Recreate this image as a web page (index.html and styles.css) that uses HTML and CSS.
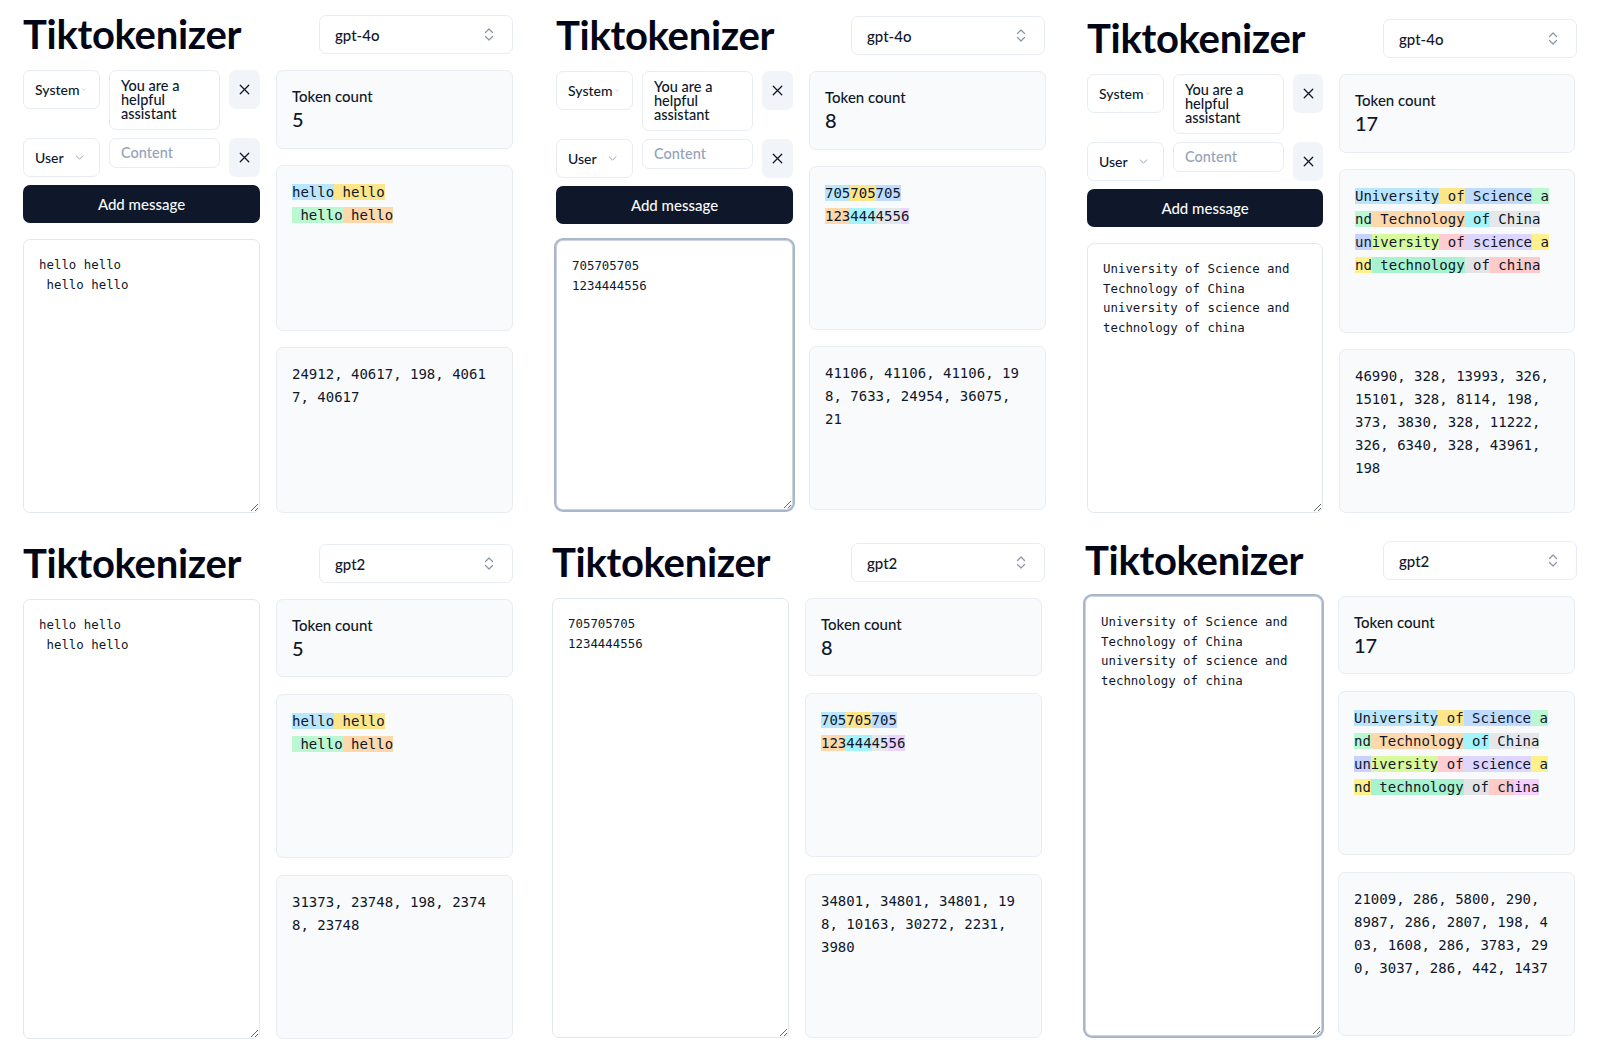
FILE: index.html
```html
<!DOCTYPE html>
<html lang="en">
<head>
<meta charset="utf-8">
<title>Tiktokenizer</title>
<link rel="stylesheet" href="styles.css">
</head>
<body>
<main class="grid">

  <!-- Panel 1 -->
  <section class="panel p1">
    <header class="bar">
      <h1 class="title">Tiktokenizer</h1>
      <button class="model"><span>gpt-4o</span><svg class="updown" viewBox="0 0 10 15"><polyline points="1.5,5.5 5,2 8.5,5.5"/><polyline points="1.5,9.5 5,13 8.5,9.5"/></svg></button>
    </header>
    <div class="body">
      <div class="left">
        <div class="msg">
          <button class="role sys"><span>System</span><svg class="chev" viewBox="0 0 10 6"><polyline points="1,1 5,5 9,1"/></svg></button>
          <div class="content">You are a helpful assistant</div>
          <button class="close"><svg viewBox="0 0 24 24"><path d="M18 6 6 18M6 6l12 12"/></svg></button>
        </div>
        <div class="msg">
          <button class="role user"><span>User</span><svg class="chev" viewBox="0 0 10 6"><polyline points="1,1 5,5 9,1"/></svg></button>
          <div class="content empty">Content</div>
          <button class="close"><svg viewBox="0 0 24 24"><path d="M18 6 6 18M6 6l12 12"/></svg></button>
        </div>
        <button class="add">Add message</button>
        <textarea class="editor gap">hello hello
 hello hello</textarea>
      </div>
      <div class="right">
        <div class="card count"><div class="label">Token count</div><div class="num">5</div></div>
        <div class="card tokens">
          <div class="line"><span class="c0">hello</span><span class="c1"> hello</span></div>
          <div class="line"><span class="c3"> hello</span><span class="c4"> hello</span></div>
        </div>
        <div class="card ids">24912, 40617, 198, 40617, 40617</div>
      </div>
    </div>
  </section>

  <!-- Panel 2 -->
  <section class="panel p2 small">
    <header class="bar">
      <h1 class="title">Tiktokenizer</h1>
      <button class="model"><span>gpt-4o</span><svg class="updown" viewBox="0 0 10 15"><polyline points="1.5,5.5 5,2 8.5,5.5"/><polyline points="1.5,9.5 5,13 8.5,9.5"/></svg></button>
    </header>
    <div class="body">
      <div class="left">
        <div class="msg">
          <button class="role sys"><span>System</span><svg class="chev" viewBox="0 0 10 6"><polyline points="1,1 5,5 9,1"/></svg></button>
          <div class="content">You are a helpful assistant</div>
          <button class="close"><svg viewBox="0 0 24 24"><path d="M18 6 6 18M6 6l12 12"/></svg></button>
        </div>
        <div class="msg">
          <button class="role user"><span>User</span><svg class="chev" viewBox="0 0 10 6"><polyline points="1,1 5,5 9,1"/></svg></button>
          <div class="content empty">Content</div>
          <button class="close"><svg viewBox="0 0 24 24"><path d="M18 6 6 18M6 6l12 12"/></svg></button>
        </div>
        <button class="add">Add message</button>
        <textarea class="editor gap focus">705705705
1234444556</textarea>
      </div>
      <div class="right">
        <div class="card count"><div class="label">Token count</div><div class="num">8</div></div>
        <div class="card tokens">
          <div class="line"><span class="c0">705</span><span class="c1">705</span><span class="c2">705</span></div>
          <div class="line"><span class="c4">123</span><span class="c5">444</span><span class="c6">455</span><span class="c7">6</span></div>
        </div>
        <div class="card ids">41106, 41106, 41106, 198, 7633, 24954, 36075, 21</div>
      </div>
    </div>
  </section>

  <!-- Panel 3 -->
  <section class="panel p3 small narrow">
    <header class="bar">
      <h1 class="title">Tiktokenizer</h1>
      <button class="model"><span>gpt-4o</span><svg class="updown" viewBox="0 0 10 15"><polyline points="1.5,5.5 5,2 8.5,5.5"/><polyline points="1.5,9.5 5,13 8.5,9.5"/></svg></button>
    </header>
    <div class="body">
      <div class="left">
        <div class="msg">
          <button class="role sys"><span>System</span><svg class="chev" viewBox="0 0 10 6"><polyline points="1,1 5,5 9,1"/></svg></button>
          <div class="content">You are a helpful assistant</div>
          <button class="close"><svg viewBox="0 0 24 24"><path d="M18 6 6 18M6 6l12 12"/></svg></button>
        </div>
        <div class="msg">
          <button class="role user"><span>User</span><svg class="chev" viewBox="0 0 10 6"><polyline points="1,1 5,5 9,1"/></svg></button>
          <div class="content empty">Content</div>
          <button class="close"><svg viewBox="0 0 24 24"><path d="M18 6 6 18M6 6l12 12"/></svg></button>
        </div>
        <button class="add">Add message</button>
        <textarea class="editor gap">University of Science and Technology of China
university of science and technology of china</textarea>
      </div>
      <div class="right">
        <div class="card count"><div class="label">Token count</div><div class="num">17</div></div>
        <div class="card tokens">
          <div class="line"><span class="c0">University</span><span class="c1"> of</span><span class="c2"> Science</span><span class="c3"> a</span></div>
          <div class="line"><span class="c3">nd</span><span class="c4"> Technology</span><span class="c5"> of</span><span class="c6"> China</span></div>
          <div class="line"><span class="c8">un</span><span class="c9">iversity</span><span class="c10"> of</span><span class="c11"> science</span><span class="c12"> a</span></div>
          <div class="line"><span class="c12">nd</span><span class="c13"> technology</span><span class="c14"> of</span><span class="c15"> china</span></div>
        </div>
        <div class="card ids">46990, 328, 13993, 326, 15101, 328, 8114, 198, 373, 3830, 328, 11222, 326, 6340, 328, 43961, 198</div>
      </div>
    </div>
  </section>

  <!-- Panel 4 -->
  <section class="panel p4 lower">
    <header class="bar">
      <h1 class="title">Tiktokenizer</h1>
      <button class="model"><span>gpt2</span><svg class="updown" viewBox="0 0 10 15"><polyline points="1.5,5.5 5,2 8.5,5.5"/><polyline points="1.5,9.5 5,13 8.5,9.5"/></svg></button>
    </header>
    <div class="body">
      <div class="left">
        <textarea class="editor">hello hello
 hello hello</textarea>
      </div>
      <div class="right">
        <div class="card count"><div class="label">Token count</div><div class="num">5</div></div>
        <div class="card tokens">
          <div class="line"><span class="c0">hello</span><span class="c1"> hello</span></div>
          <div class="line"><span class="c3"> hello</span><span class="c4"> hello</span></div>
        </div>
        <div class="card ids">31373, 23748, 198, 23748, 23748</div>
      </div>
    </div>
  </section>

  <!-- Panel 5 -->
  <section class="panel p5 lower">
    <header class="bar">
      <h1 class="title">Tiktokenizer</h1>
      <button class="model"><span>gpt2</span><svg class="updown" viewBox="0 0 10 15"><polyline points="1.5,5.5 5,2 8.5,5.5"/><polyline points="1.5,9.5 5,13 8.5,9.5"/></svg></button>
    </header>
    <div class="body">
      <div class="left">
        <textarea class="editor">705705705
1234444556</textarea>
      </div>
      <div class="right">
        <div class="card count"><div class="label">Token count</div><div class="num">8</div></div>
        <div class="card tokens">
          <div class="line"><span class="c0">705</span><span class="c1">705</span><span class="c2">705</span></div>
          <div class="line"><span class="c4">123</span><span class="c5">444</span><span class="c6">45</span><span class="c7">56</span></div>
        </div>
        <div class="card ids">34801, 34801, 34801, 198, 10163, 30272, 2231, 3980</div>
      </div>
    </div>
  </section>

  <!-- Panel 6 -->
  <section class="panel p6 lower">
    <header class="bar">
      <h1 class="title">Tiktokenizer</h1>
      <button class="model"><span>gpt2</span><svg class="updown" viewBox="0 0 10 15"><polyline points="1.5,5.5 5,2 8.5,5.5"/><polyline points="1.5,9.5 5,13 8.5,9.5"/></svg></button>
    </header>
    <div class="body">
      <div class="left">
        <textarea class="editor focus">University of Science and Technology of China
university of science and technology of china</textarea>
      </div>
      <div class="right">
        <div class="card count"><div class="label">Token count</div><div class="num">17</div></div>
        <div class="card tokens">
          <div class="line"><span class="c0">University</span><span class="c1"> of</span><span class="c2"> Science</span><span class="c3"> a</span></div>
          <div class="line"><span class="c3">nd</span><span class="c4"> Technology</span><span class="c5"> of</span><span class="c6"> China</span></div>
          <div class="line"><span class="c8">un</span><span class="c9">iversity</span><span class="c10"> of</span><span class="c11"> science</span><span class="c12"> a</span></div>
          <div class="line"><span class="c12">nd</span><span class="c13"> technology</span><span class="c14"> of</span><span class="c15"> ch</span><span class="c16">ina</span></div>
        </div>
        <div class="card ids">21009, 286, 5800, 290, 8987, 286, 2807, 198, 403, 1608, 286, 3783, 290, 3037, 286, 442, 1437</div>
      </div>
    </div>
  </section>

</main>
</body>
</html>
```

FILE: styles.css
```css
* { box-sizing: border-box; }

body {
  margin: 0;
  background: #ffffff;
  color: #0f172a;
  font-family: Lato, "Noto Sans", sans-serif;
}

.grid {
  display: grid;
  grid-template-columns: repeat(3, 490px);
  column-gap: 42px;
  row-gap: 31px;
  align-items: start;
  padding: 15px 0 0 23px;
}

.panel {
  display: flex;
  flex-direction: column;
  gap: 16px;
}
.p2 { margin: 1px 0 0 1px; }
.p3 { margin: 4px 0 0 0; }
.p5 { margin: -1px 0 0 -3px; }
.p6 { margin: -3px 0 0 -2px; }

.bar {
  display: flex;
  justify-content: space-between;
  align-items: center;
  height: 39px;
}

.title {
  margin: 0;
  font-size: 40px;
  line-height: 39px;
  font-weight: 700;
  color: #020617;
  letter-spacing: -0.3px;
}

button {
  font-family: inherit;
  color: inherit;
  cursor: pointer;
}

.model {
  width: 194px;
  height: 39px;
  display: flex;
  align-items: center;
  justify-content: space-between;
  padding: 0 18px 0 15px;
  background: #ffffff;
  border: 1px solid #e8edf3;
  border-radius: 7px;
  font-size: 15px;
  font-weight: 500;
}

.updown {
  width: 10px;
  height: 15px;
  fill: none;
  stroke: #8b95a5;
  stroke-width: 1.2;
  stroke-linecap: round;
  stroke-linejoin: round;
}

.body {
  display: grid;
  grid-template-columns: 237px 237px;
  column-gap: 16px;
}
.narrow .body { grid-template-columns: 236px 236px; }

.left {
  display: flex;
  flex-direction: column;
  gap: 8px;
}

.msg {
  display: grid;
  grid-template-columns: 77px 111px 1fr;
  column-gap: 9px;
  align-items: start;
}

.role {
  height: 39px;
  display: flex;
  align-items: center;
  padding: 0 13px 0 11px;
  background: #ffffff;
  border: 1px solid #e8edf3;
  border-radius: 7px;
  font-size: 14px;
  font-weight: 500;
}
.role .chev {
  margin-left: auto;
  fill: none;
  stroke: #94a3b8;
  stroke-width: 1.2;
  stroke-linecap: round;
  stroke-linejoin: round;
}
.sys .chev { width: 4px; height: 3px; }
.user .chev { width: 9px; height: 5px; margin-right: 2px; }

.content {
  min-height: 30px;
  padding: 8px 11px 8px 11px;
  border: 1px solid #e8edf3;
  border-radius: 7px;
  background: #ffffff;
  font-size: 14.5px;
  line-height: 14px;
  font-weight: 500;
}
.content.empty {
  height: 30px;
  padding: 6px 11px;
  line-height: 16px;
  color: #94a3b8;
}

.close {
  height: 39px;
  display: flex;
  align-items: center;
  justify-content: center;
  background: #f1f5f9;
  border: none;
  border-radius: 7px;
  padding: 0;
}
.close svg {
  width: 17px;
  height: 17px;
  fill: none;
  stroke: #0f172a;
  stroke-width: 1.8;
  stroke-linecap: round;
}

.add {
  height: 38px;
  background: #0f172a;
  color: #f8fafc;
  border: none;
  border-radius: 7px;
  font-size: 15px;
  font-weight: 500;
}

.editor {
  flex: 1;
  min-height: 0;
  width: 100%;
  margin: 0;
  padding: 15px;
  border: 1px solid #e2e8f0;
  border-radius: 7px;
  background: #ffffff;
  color: #0f172a;
  font-family: "DejaVu Sans Mono", "Liberation Mono", monospace;
  font-size: 12.4px;
  line-height: 19.5px;
  outline: none;
}
.editor.gap { margin-top: 8px; }
.editor.focus {
  border-color: #cbd5e1;
  box-shadow: 0 0 0 2px #aab7c9;
}

.right {
  display: flex;
  flex-direction: column;
  gap: 16px;
}

.card {
  background: #f8fafc;
  border: 1px solid #e8edf3;
  border-radius: 7px;
  padding: 15px;
}

.count { height: 79px; }
.label { font-size: 15px; line-height: 20px; font-weight: 500; }
.num { font-size: 20px; line-height: 26px; font-weight: 500; }

.tokens,
.ids {
  height: 166px;
  font-family: "DejaVu Sans Mono", "Liberation Mono", monospace;
  font-size: 14px;
  line-height: 23px;
  color: #0f172a;
}
.small .tokens,
.small .ids { height: 164px; }

.lower .right { gap: 17px; }
.lower .count { height: 78px; }
.lower .tokens,
.lower .ids { height: 164px; }

.line { white-space: pre; }

.ids {
  padding-right: 20px;
  word-break: break-all;
}

.c0 { background: #bae6fd; }
.c1 { background: #fde68a; }
.c2 { background: #bfdbfe; }
.c3 { background: #bbf7d0; }
.c4 { background: #fed7aa; }
.c5 { background: #a5f3fc; }
.c6 { background: #e5e7eb; }
.c7 { background: #e9d5ff; }
.c8 { background: #c7d2fe; }
.c9 { background: #d9f99d; }
.c10 { background: #fecdd3; }
.c11 { background: #ddd6fe; }
.c12 { background: #fef08a; }
.c13 { background: #a7f3d0; }
.c14 { background: #e4e4e7; }
.c15 { background: #fecaca; }
.c16 { background: #f5d0fe; }
```
